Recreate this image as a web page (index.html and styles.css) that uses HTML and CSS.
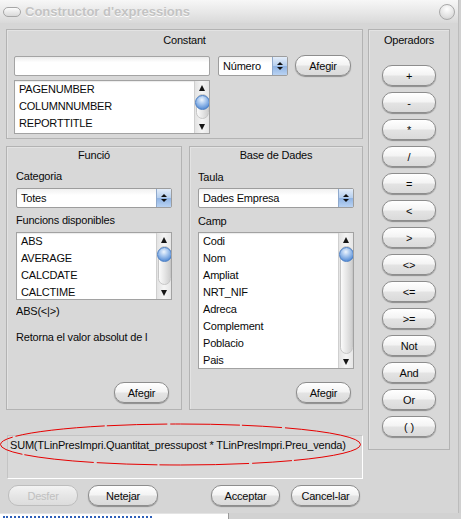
FILE: index.html
```html
<!DOCTYPE html>
<html>
<head>
<meta charset="utf-8">
<title>Constructor d'expressions</title>
<link rel="stylesheet" href="styles.css">
</head>
<body>
<div class="window">
  <div class="titlebar">
    <span class="title-pill"></span>
    <span class="title-text">Constructor d'expressions</span>
    <span class="title-close"></span>
  </div>
  <div class="content">
    <div class="main">
      <div class="leftcol">
        <section class="panel constant">
          <div class="panel-title">Constant</div>
          <div class="const-row">
            <div class="textinput"></div>
            <div class="select sel-num"><span class="sel-text">Número</span><span class="sel-arrow"><i class="up"></i><i class="down"></i></span></div>
            <button class="btn btn-const">Afegir</button>
          </div>
          <div class="list list-const">
            <ul class="items">
              <li>PAGENUMBER</li>
              <li>COLUMNNUMBER</li>
              <li>REPORTTITLE</li>
            </ul>
            <div class="scrollbar">
              <span class="arr arr-up"></span>
              <div class="track"><span class="pill"></span><span class="thumb"></span></div>
              <span class="arr arr-down"></span>
            </div>
          </div>
        </section>
        <div class="lower">
          <section class="panel func">
            <div class="panel-title">Funció</div>
            <div class="label l-cat">Categoria</div>
            <div class="select sel-cat"><span class="sel-text">Totes</span><span class="sel-arrow"><i class="up"></i><i class="down"></i></span></div>
            <div class="label l-funcs">Funcions disponibles</div>
            <div class="list list-func">
              <ul class="items">
                <li>ABS</li>
                <li>AVERAGE</li>
                <li>CALCDATE</li>
                <li>CALCTIME</li>
              </ul>
              <div class="scrollbar">
                <span class="arr arr-up"></span>
                <div class="track"><span class="pill"></span><span class="thumb"></span></div>
                <span class="arr arr-down"></span>
              </div>
            </div>
            <div class="label l-syntax">ABS(&lt;|&gt;)</div>
            <div class="label l-desc">Retorna el valor absolut de l</div>
            <button class="btn btn-panel">Afegir</button>
          </section>
          <section class="panel db">
            <div class="panel-title">Base de Dades</div>
            <div class="label l-taula">Taula</div>
            <div class="select sel-taula"><span class="sel-text">Dades Empresa</span><span class="sel-arrow"><i class="up"></i><i class="down"></i></span></div>
            <div class="label l-camp">Camp</div>
            <div class="list list-camp">
              <ul class="items">
                <li>Codi</li>
                <li>Nom</li>
                <li>Ampliat</li>
                <li>NRT_NIF</li>
                <li>Adreca</li>
                <li>Complement</li>
                <li>Poblacio</li>
                <li>Pais</li>
              </ul>
              <div class="scrollbar">
                <span class="arr arr-up"></span>
                <div class="track"><span class="pill"></span><span class="thumb"></span></div>
                <span class="arr arr-down"></span>
              </div>
            </div>
            <button class="btn btn-panel">Afegir</button>
          </section>
        </div>
        <div class="expr">SUM(TLinPresImpri.Quantitat_pressupost * TLinPresImpri.Preu_venda)</div>
      </div>
      <section class="panel ops">
        <div class="panel-title">Operadors</div>
        <div class="op-list">
          <button class="btn op">+</button>
          <button class="btn op">-</button>
          <button class="btn op">*</button>
          <button class="btn op">/</button>
          <button class="btn op">=</button>
          <button class="btn op">&lt;</button>
          <button class="btn op">&gt;</button>
          <button class="btn op">&lt;&gt;</button>
          <button class="btn op">&lt;=</button>
          <button class="btn op">&gt;=</button>
          <button class="btn op">Not</button>
          <button class="btn op">And</button>
          <button class="btn op">Or</button>
          <button class="btn op">( )</button>
        </div>
      </section>
    </div>
    <div class="actions">
      <button class="btn act disabled">Desfer</button>
      <button class="btn act act-clear">Netejar</button>
      <button class="btn act act-ok">Acceptar</button>
      <button class="btn act act-cancel">Cancel-lar</button>
    </div>
  </div>
  <svg class="ellipse" width="364" height="46" viewBox="0 0 364 46">
    <ellipse cx="180.5" cy="22.5" rx="180" ry="20.5" fill="none" stroke="#e60000" stroke-width="1" stroke-dasharray="70 2 40 3 90 2 60 3"/>
  </svg>
</div>
<div class="desktop"><div class="desk-left"></div><div class="desk-right"></div></div>
</body>
</html>
```

FILE: styles.css
```css
* { box-sizing: border-box; }
html, body { margin: 0; padding: 0; }
body {
  width: 461px;
  height: 519px;
  overflow: hidden;
  background: #d0d0d0;
  font-family: "Liberation Sans", Arial, sans-serif;
  font-size: 11px;
  color: #0a0a0a;
  letter-spacing: -0.2px;
}
.window {
  width: 459px;
  height: 513px;
  background: #d6d6d6;
  border-right: 1px solid #bcbcbc;
  position: relative;
}
.titlebar {
  height: 23px;
  display: flex;
  align-items: center;
  padding: 0 3px 0 3px;
  background: linear-gradient(#f7f7f7, #e7e7e7 55%, #d9d9d9);
}
.title-pill {
  width: 18px;
  height: 10px;
  border: 1px solid #a6a6a6;
  border-radius: 5px;
  background: linear-gradient(#fbfbfb, #d9d9d9);
}
.title-text {
  flex: 1;
  margin-left: 4px;
  font-size: 13px;
  font-weight: bold;
  letter-spacing: 0;
  color: #c3c3c3;
  text-shadow: 0 1px 0 #fcfcfc;
}
.title-close {
  width: 16px;
  height: 16px;
  border-radius: 50%;
  border: 1px solid #a9a9a9;
  background: radial-gradient(circle at 50% 30%, #ffffff, #e2e2e2 60%, #c9c9c9);
}
.content { padding: 6px 0 0 6px; }
.main {
  display: grid;
  grid-template-columns: 357px 82px;
  column-gap: 5px;
  align-items: start;
}
.leftcol { display: flex; flex-direction: column; }
.panel {
  border: 1px solid #b3b3b3;
  background: #d8d8d8;
  box-shadow: inset 1px 1px 0 #e3e3e3;
}
.panel-title { text-align: center; line-height: 16px; }
.label { line-height: 16px; white-space: nowrap; overflow: hidden; }

/* Constant */
.constant { height: 110px; padding: 0 7px; }
.constant .panel-title { padding-top: 2px; }
.const-row { display: flex; align-items: center; height: 21px; margin-top: 7px; }
.textinput {
  width: 196px;
  height: 20px;
  background: linear-gradient(#ececec, #ffffff 30%);
  border: 1px solid #a4a4a4;
  border-radius: 2px;
}
.sel-num { width: 70px; margin-left: 8px; }
.btn-const { width: 56px; margin-left: 7px; }
.list-const { width: 196px; height: 54px; margin-top: 4px; }

/* Select */
.select {
  display: flex;
  align-items: stretch;
  height: 20px;
  background: linear-gradient(#f1f1f1, #ffffff 35%);
  border: 1px solid #9d9d9d;
  border-radius: 2px;
}
.sel-text { flex: 1; padding-left: 4px; line-height: 18px; white-space: nowrap; }
.sel-arrow {
  width: 15px;
  display: flex;
  flex-direction: column;
  align-items: center;
  justify-content: center;
  gap: 2px;
  border-left: 1px solid #8fa9cc;
  background: linear-gradient(#e3edf9, #b6cfee 48%, #90b4e4 52%, #b9d2f2);
}
.sel-arrow .up {
  width: 0; height: 0;
  border-left: 3px solid transparent;
  border-right: 3px solid transparent;
  border-bottom: 3px solid #111;
}
.sel-arrow .down {
  width: 0; height: 0;
  border-left: 3px solid transparent;
  border-right: 3px solid transparent;
  border-top: 3px solid #111;
}

/* List */
.list {
  display: flex;
  background: #ffffff;
  border: 1px solid #a2a2a2;
  box-shadow: inset 0 1px 1px rgba(0,0,0,0.08);
  overflow: hidden;
}
.items { list-style: none; margin: 0; padding: 0 0 0 4px; flex: 1; overflow: hidden; }
.items li { height: 17px; line-height: 17px; white-space: nowrap; }
.scrollbar {
  width: 15px;
  display: flex;
  flex-direction: column;
  align-items: center;
  background: linear-gradient(90deg, #e3e3e3, #f5f5f5 50%, #e6e6e6);
  border-left: 1px solid #cfcfcf;
}
.arr { height: 13px; width: 100%; display: flex; align-items: center; justify-content: center; flex: none; }
.arr-up::before {
  content: "";
  border-left: 3px solid transparent;
  border-right: 3px solid transparent;
  border-bottom: 6px solid #151515;
}
.arr-down::before {
  content: "";
  border-left: 3px solid transparent;
  border-right: 3px solid transparent;
  border-top: 6px solid #151515;
}
.track { flex: 1; width: 13px; position: relative; }
.pill {
  position: absolute;
  left: 0; right: 0; top: 0; bottom: 1px;
  border-radius: 7px;
  border: 1px solid #c6c6c6;
  background: linear-gradient(90deg, #fbfbfb, #e4e4e4 55%, #cfcfcf);
}
.thumb {
  position: absolute;
  left: -1px;
  top: 1px;
  width: 15px;
  height: 15px;
  border-radius: 50%;
  border: 1px solid #4b7fc4;
  background: radial-gradient(circle at 45% 30%, #eef5fd 0, #a9c8ef 35%, #5f93d8 75%, #4679c2 100%);
}

/* Lower panels */
.lower {
  display: grid;
  grid-template-columns: 176px 174px;
  column-gap: 7px;
  margin-top: 7px;
  height: 264px;
}
.func, .db { display: flex; flex-direction: column; height: 264px; }
.func { padding: 0 9px; }
.db { padding: 0 8px; }
.l-cat { margin-top: 5px; }
.sel-cat { margin-top: 4px; }
.l-funcs { margin-top: 4px; }
.list-func { height: 68px; margin-top: 4px; }
.l-syntax { margin-top: 3px; }
.l-desc { margin-top: 10px; }
.l-taula { margin-top: 6px; }
.sel-taula { margin-top: 3px; }
.l-camp { margin-top: 5px; }
.list-camp { height: 137px; margin-top: 3px; }
.btn-panel { width: 55px; margin-top: auto; margin-bottom: 6px; margin-right: 3px; align-self: flex-end; }

/* Expression */
.expr {
  margin-top: 25px;
  margin-left: 1px;
  width: 356px;
  height: 44px;
  padding: 1px 2px;
  line-height: 16px;
  white-space: nowrap;
  overflow: hidden;
  background: #d9d9d9;
  border-top: 1px solid #c4c4c4;
  border-left: 1px solid #c4c4c4;
  border-bottom: 1px solid #ffffff;
  border-right: 1px solid #ffffff;
}

/* Operators */
.ops { height: 421px; }
.ops .panel-title { padding-top: 2px; }
.op-list {
  display: flex;
  flex-direction: column;
  align-items: center;
  gap: 6px;
  margin-top: 17px;
}
.op { width: 54px; }

/* Buttons */
.btn {
  font: inherit;
  letter-spacing: inherit;
  color: #0a0a0a;
  height: 21px;
  padding: 0;
  border: 1px solid #8d8d8d;
  border-radius: 10px;
  background: linear-gradient(#ffffff, #f4f4f4 45%, #e3e3e3 55%, #dadada);
  box-shadow: 0 1px 1px rgba(0,0,0,0.35);
}
.actions { display: flex; margin-top: 6px; padding-left: 2px; }
.act { width: 70px; }
.act-clear { margin-left: 10px; }
.act-ok { width: 69px; margin-left: 53px; }
.act-cancel { width: 69px; margin-left: 11px; }
.disabled {
  color: #c0c0c0;
  border-color: #bdbdbd;
  background: linear-gradient(#f3f3f3, #e6e6e6 50%, #dcdcdc);
  box-shadow: none;
}

/* Red marking ellipse */
.ellipse { position: absolute; left: 0; top: 422px; }

/* Desktop strip below window */
.desktop { display: flex; height: 6px; }
.desk-left {
  width: 228px;
  background: #ffffff;
  border-top: 1px solid #e4e4e4;
  position: relative;
}
.desk-left::after {
  content: "";
  position: absolute;
  left: 3px; right: 76px; top: 2px;
  border-top: 2px dotted #2d5fb8;
}
.desk-right { flex: 1; background: #d2d2d2; border-left: 1px solid #9a9a9a; }
```
